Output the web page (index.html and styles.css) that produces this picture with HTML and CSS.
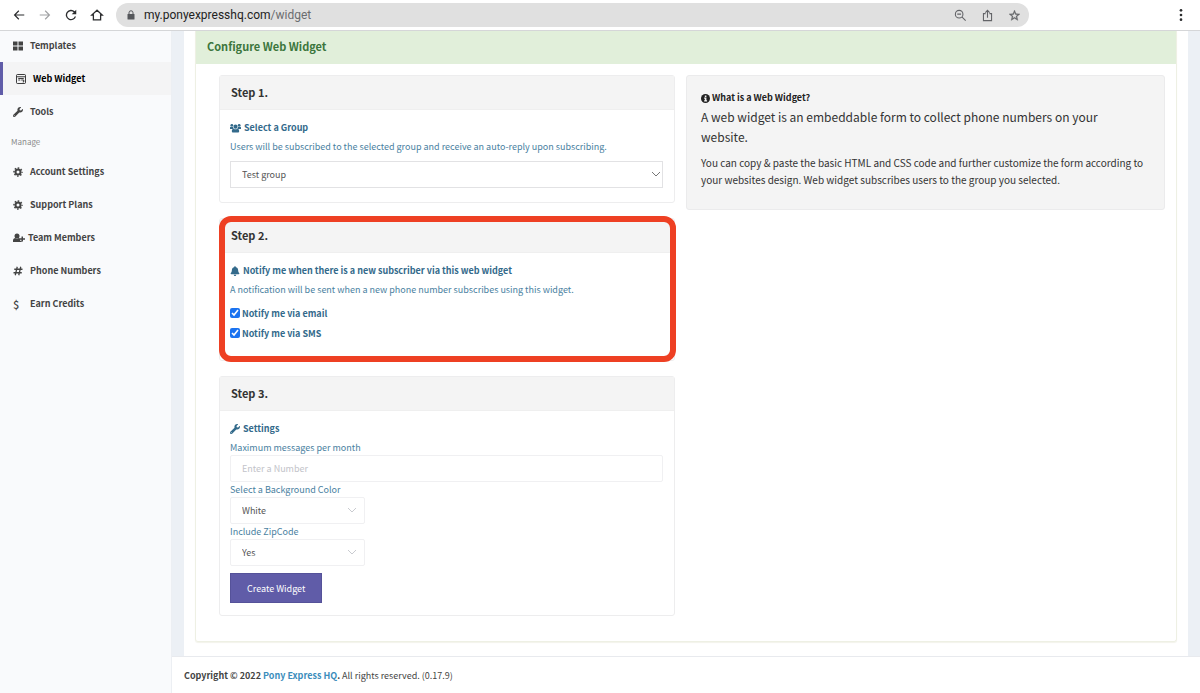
FILE: index.html
```html
<!DOCTYPE html>
<html lang="en">
<head>
    <meta charset="UTF-8">
    <meta name="viewport" content="width=device-width, initial-scale=1.0">
    <title>Web Widget - Pony Express HQ</title>
    <link rel="stylesheet" href="styles.css">
</head>
<body>

    <!-- Shared icons -->
    <svg class="sprite" aria-hidden="true">
        <symbol id="wrench" viewBox="0 0 512 512">
            <path d="M507.73 109.1c-2.24-9.03-13.54-12.09-20.12-5.51l-74.36 74.36-67.88-11.31-11.31-67.88 74.36-74.36c6.62-6.62 3.43-17.9-5.66-20.16-47.38-11.74-99.55.91-136.58 37.93-39.64 39.64-50.55 97.1-34.05 147.2L18.74 402.76c-24.99 24.99-24.99 65.51 0 90.5 24.99 24.99 65.51 24.99 90.5 0l213.21-213.21c50.12 16.71 107.47 5.68 147.37-34.22 37.07-37.07 49.7-89.32 37.91-136.73zM64 472c-13.25 0-24-10.75-24-24 0-13.26 10.75-24 24-24s24 10.74 24 24c0 13.25-10.75 24-24 24z"/>
        </symbol>
        <symbol id="cog" viewBox="0 0 20 20">
            <circle cx="10" cy="10" r="5" fill="none" stroke="currentColor" stroke-width="4"/>
            <circle cx="10" cy="10" r="8" fill="none" stroke="currentColor" stroke-width="3" stroke-dasharray="3.14" stroke-dashoffset="1.57"/>
        </symbol>
        <symbol id="chevron" viewBox="0 0 10 6">
            <path d="M1 1l4 4 4-4" fill="none" stroke="currentColor"/>
        </symbol>
    </svg>

    <!-- Browser bar -->
    <header class="browser-bar">
        <button class="bar-btn" aria-label="Back"><svg viewBox="0 0 24 24"><path d="M21 11H6.83l5.59-5.59L11 4l-8 8 8 8 1.41-1.41L6.83 13H21z"/></svg></button>
        <button class="bar-btn disabled" aria-label="Forward"><svg viewBox="0 0 24 24"><path d="M3 11h14.17l-5.59-5.59L13 4l8 8-8 8-1.41-1.41L17.17 13H3z"/></svg></button>
        <button class="bar-btn" aria-label="Reload"><svg viewBox="0 0 24 24"><path d="M18.4 5.6A9 9 0 1 0 20.7 14.6h-2.4A6.7 6.7 0 1 1 16.7 7.3L13.2 10.8H21V3z"/></svg></button>
        <button class="bar-btn" aria-label="Home"><svg viewBox="0 0 24 24"><path d="M12 3.8L3 12h2.8v8.2h12.4V12H21z" fill="none" stroke="currentColor" stroke-width="2.2"/></svg></button>
        <div class="address">
            <svg class="lock" viewBox="0 0 16 20"><path d="M2 8h12a1 1 0 0 1 1 1v9a1 1 0 0 1-1 1H2a1 1 0 0 1-1-1V9a1 1 0 0 1 1-1z"/><path d="M4 9V5.500a4 4 0 0 1 8 0V9" fill="none" stroke="currentColor" stroke-width="2"/></svg>
            <span class="url">my.ponyexpresshq.com<span class="path">/widget</span></span>
            <div class="address-tools">
                <button class="bar-btn" aria-label="Zoom"><svg viewBox="0 0 24 24" fill="none" stroke="currentColor" stroke-width="2"><circle cx="9.500" cy="9.500" r="7"/><path d="M6 9.500h7M14.500 14.500l7 7"/></svg></button>
                <button class="bar-btn" aria-label="Share"><svg viewBox="0 0 24 24" fill="none" stroke="currentColor" stroke-width="2"><path d="M8.500 8.500H4.500v13h15v-13h-4M12 16V2.500M8 6.500l4-4 4 4"/></svg></button>
                <button class="bar-btn" aria-label="Bookmark"><svg viewBox="0 0 24 24"><path d="M22 9.240l-7.190-.620L12 2 9.190 8.630 2 9.240l5.460 4.730L5.820 21 12 17.270 18.180 21l-1.630-7.030L22 9.240zM12 15.400l-3.760 2.270 1-4.280-3.320-2.880 4.380-.380L12 6.100l1.710 4.040 4.380.380-3.320 2.880 1 4.280L12 15.400z" stroke="currentColor" stroke-width=".7"/></svg></button>
            </div>
        </div>
        <button class="bar-btn menu" aria-label="Menu"><svg viewBox="0 0 24 24"><circle cx="12" cy="4" r="2.300"/><circle cx="12" cy="12" r="2.300"/><circle cx="12" cy="20" r="2.300"/></svg></button>
    </header>

    <div class="wrapper">
        <!-- Sidebar -->
        <nav class="sidebar">
            <a href="#"><svg class="icon" viewBox="0 0 20 20"><path d="M0 1h9v8H0zM11 1h9v8h-9zM0 11h9v8H0zM11 11h9v8h-9z"/></svg>Templates</a>
            <a href="#" class="active"><svg class="icon" viewBox="0 0 20 20" fill="none" stroke="currentColor" stroke-width="1.500"><rect x="1" y="1" width="18" height="18" rx="2"/><path d="M2 5.500h16M4.500 9h11M4.500 12h4M10.500 12h5v4h-2"/></svg>Web Widget</a>
            <a href="#"><svg class="icon"><use href="#wrench"/></svg>Tools</a>
            <h6>Manage</h6>
            <a href="#"><svg class="icon"><use href="#cog"/></svg>Account Settings</a>
            <a href="#"><svg class="icon"><use href="#cog"/></svg>Support Plans</a>
            <a href="#" class="wide-icon"><svg class="icon" viewBox="0 0 24 20"><circle cx="8" cy="6" r="5"/><path d="M0 18v-3c0-3 2-5 4.500-5 2 1.500 5 1.500 7 0 1.500 0 2.500.5 3.300 1.500H14v4h3V18zM17 7h3v3.500h4v3h-4V17h-3v-3.500h-3v-3h3z"/></svg>Team Members</a>
            <a href="#"><svg class="icon" viewBox="0 0 20 20" fill="none" stroke="currentColor" stroke-width="2.600"><path d="M8.500 1.500L4.500 18.500M15.500 1.500L11.500 18.500M2.500 6.500H19M1 13.500H17.500"/></svg>Phone Numbers</a>
            <a href="#"><span class="icon dollar">$</span>Earn Credits</a>
        </nav>

        <div class="main">
            <main class="content">
                <section class="panel">
                    <h1>Configure Web Widget</h1>
                    <div class="columns">
                        <form class="steps">
                            <!-- Step 1 -->
                            <section class="card">
                                <h2>Step 1.</h2>
                                <div class="card-body">
                                    <label class="title" for="group"><svg class="users" viewBox="0 0 24 20"><circle cx="4" cy="4" r="3"/><circle cx="20" cy="4" r="3"/><circle cx="12" cy="7" r="4.500"/><path d="M0 12V9c0-1.500 1-2 2-2 1.500 1 3 1 4.500.500 0 2 .500 3.500 1.500 4.500zM24 12V9c0-1.500-1-2-2-2-1.500 1-3 1-4.500.500 0 2-.500 3.500-1.500 4.500zM4 17c0-3 1-5.500 4-5.500 2.500 1.500 5.500 1.500 8 0 3 0 4 2.500 4 5.500 0 2-1 3-3 3H7c-2 0-3-1-3-3z"/></svg>Select a Group</label>
                                    <p class="hint">Users will be subscribed to the selected group and receive an auto-reply upon subscribing.</p>
                                    <div class="select group-select">
                                        <select id="group"><option>Test group</option></select>
                                        <svg><use href="#chevron"/></svg>
                                    </div>
                                </div>
                            </section>

                            <!-- Step 2 -->
                            <section class="card highlight">
                                <h2>Step 2.</h2>
                                <div class="card-body">
                                    <h3 class="title"><svg viewBox="0 0 448 512"><path d="M224 512c35.32 0 63.97-28.65 63.97-64H160.03c0 35.35 28.65 64 63.97 64zm215.39-149.71c-19.32-20.76-55.47-51.99-55.47-154.29 0-77.7-54.48-139.9-127.94-155.16V32c0-17.67-14.32-32-31.98-32s-31.98 14.33-31.98 32v20.84C118.56 68.1 64.08 130.3 64.08 208c0 102.3-36.15 133.53-55.47 154.29-6 6.45-8.66 14.16-8.61 21.71.11 16.4 12.98 32 32.1 32h383.8c19.12 0 32-15.6 32.1-32 .05-7.55-2.61-15.27-8.61-21.71z"/></svg>Notify me when there is a new subscriber via this web widget</h3>
                                    <p class="hint">A notification will be sent when a new phone number subscribes using this widget.</p>
                                    <div class="checks">
                                        <label><input type="checkbox" checked>Notify me via email</label>
                                        <label><input type="checkbox" checked>Notify me via SMS</label>
                                    </div>
                                </div>
                            </section>

                            <!-- Step 3 -->
                            <section class="card">
                                <h2>Step 3.</h2>
                                <div class="card-body settings">
                                    <h3 class="title"><svg><use href="#wrench"/></svg>Settings</h3>
                                    <label for="max">Maximum messages per month</label>
                                    <input type="text" id="max" placeholder="Enter a Number">
                                    <label for="color">Select a Background Color</label>
                                    <div class="select small">
                                        <select id="color"><option>White</option></select>
                                        <svg><use href="#chevron"/></svg>
                                    </div>
                                    <label for="zip">Include ZipCode</label>
                                    <div class="select small">
                                        <select id="zip"><option>Yes</option></select>
                                        <svg><use href="#chevron"/></svg>
                                    </div>
                                    <button type="button" class="create">Create Widget</button>
                                </div>
                            </section>
                        </form>

                        <aside class="info">
                            <h3><svg viewBox="0 0 20 20"><circle cx="10" cy="10" r="10"/><path d="M8.500 3.500h3.500v3H8.500zM7 8h5v6h1.500v2.500H7V14h1.500v-3.500H7z" fill="#f4f4f4"/></svg>What is a Web Widget?</h3>
                            <p class="lead">A web widget is an embeddable form to collect phone numbers on your website.</p>
                            <p>You can copy &amp; paste the basic HTML and CSS code and further customize the form according to your websites design. Web widget subscribes users to the group you selected.</p>
                        </aside>
                    </div>
                </section>
            </main>

            <footer><strong>Copyright © 2022 <a href="#">Pony Express HQ</a>.</strong> All rights reserved. (0.17.9)</footer>
        </div>
    </div>

</body>
</html>
```
FILE: styles.css
```css
* {
    box-sizing: border-box;
}

body {
    margin: 0;
    min-height: 100vh;
    display: flex;
    flex-direction: column;
    font-family: "Noto Sans CJK JP", "Noto Sans", sans-serif;
    font-size: 9px;
    line-height: 18px;
    color: #333;
    background-color: #ecf0f5;
}

h1, h2, h3, h6, p {
    margin: 0;
}

svg {
    fill: currentColor;
}

svg[fill="none"] {
    fill: none;
}

.sprite {
    position: absolute;
    width: 0;
    height: 0;
}

/* Browser bar */
.browser-bar {
    position: relative;
    z-index: 1;
    display: flex;
    align-items: center;
    gap: 12px;
    height: 31px;
    padding: 0 12px;
    background-color: #fff;
    border-bottom: 1px solid #d5d6d8;
    font-family: Roboto, sans-serif;
}

.bar-btn {
    display: flex;
    padding: 0;
    border: none;
    background: none;
    color: #2b2c2e;
}

.bar-btn svg {
    width: 14px;
    height: 14px;
}

.bar-btn.disabled {
    color: #a0a1a3;
}

.address {
    display: flex;
    align-items: center;
    flex: 1;
    height: 24px;
    margin-right: 133px;
    padding: 0 8px 0 11px;
    border-radius: 12px;
    background-color: #e0e0e0;
}

.lock {
    width: 8px;
    height: 10px;
    margin-right: 9px;
    color: #55575b;
}

.url {
    font-size: 12px;
    color: #222;
}

.url .path {
    color: #6b6c6f;
}

.address-tools {
    display: flex;
    gap: 14px;
    margin-left: auto;
}

.address-tools .bar-btn {
    color: #636468;
}

.address-tools svg {
    width: 13px;
    height: 13px;
}

/* Sidebar */
.wrapper {
    display: flex;
    flex: 1;
}

.sidebar {
    width: 172px;
    margin-top: -2px;
    background-color: #f9fafc;
    border-right: 1px solid #eceff3;
}

.sidebar a {
    display: flex;
    align-items: center;
    gap: 7px;
    height: 33px;
    padding-left: 13px;
    color: #444;
    font-weight: 700;
    text-decoration: none;
}

.sidebar a.active {
    border-left: 3px solid #605ca8;
    background-color: #f4f4f5;
    color: #000;
}

.sidebar .icon {
    width: 10px;
    height: 10px;
}

.sidebar .wide-icon {
    gap: 3px;
}

.sidebar .wide-icon .icon {
    width: 12px;
}

.sidebar .dollar {
    line-height: 10px;
    font-size: 11px;
    font-weight: 500;
}

.sidebar h6 {
    padding-left: 11px;
    font-size: 8px;
    font-weight: 400;
    line-height: 27px;
    color: #8b8b8b;
}

/* Main area */
.main {
    flex: 1;
    display: flex;
    flex-direction: column;
}

.content {
    flex: 1;
    margin: 0 12px;
    padding: 0 11px 13px;
    background-color: #fff;
}

.panel {
    border: 1px solid #eef0e4;
    border-top: none;
    border-radius: 0 0 3px 3px;
    box-shadow: 0 1px 1px #f3f3ec;
}

.panel h1 {
    padding: 0 11px 2px;
    font-size: 11px;
    line-height: 31px;
    color: #3c763d;
    background-color: #e1efda;
}

.columns {
    display: grid;
    grid-template-columns: 456fr 479fr;
    align-items: start;
    gap: 11px;
    padding: 11px 11px 25px 23px;
}

.steps {
    display: flex;
    flex-direction: column;
    gap: 15px;
}

/* Cards */
.card {
    border: 1px solid #ededee;
    border-radius: 3px;
    background-color: #fff;
}

.card h2 {
    padding: 0 11px;
    font-size: 11px;
    line-height: 33px;
    background-color: #f4f4f4;
    border-bottom: 1px solid #efefef;
}

.card-body {
    padding: 9px 11px 14px 10px;
    color: #4a7f9f;
}

.title {
    display: flex;
    align-items: center;
    gap: 3px;
    font-size: 9px;
    font-weight: 700;
    line-height: 18px;
    color: #336a8b;
}

.title svg {
    width: 10px;
    height: 10px;
}

.title .users {
    width: 11px;
}

.hint {
    margin-bottom: 4px;
    line-height: 20px;
}

.highlight {
    position: relative;
}

.highlight::after {
    content: "";
    position: absolute;
    inset: -3px -2px -2px -1px;
    border: 6px solid #ee4023;
    border-radius: 12px;
    pointer-events: none;
}

/* Form fields */
input[type="text"], select {
    display: block;
    width: 100%;
    height: 27px;
    padding: 0 11px;
    border: 1px solid #f0f0f2;
    border-radius: 2px;
    background-color: #fff;
    font-family: inherit;
    font-size: 9px;
    color: #555;
    appearance: none;
}

input::placeholder {
    color: #c2c3c9;
}

.select {
    position: relative;
}

.select svg {
    position: absolute;
    top: 10px;
    right: 8px;
    width: 10px;
    height: 6px;
    color: #c9cbd0;
}

.select.small {
    width: 135px;
}

.group-select select {
    border-color: #e2e2e4;
    border-radius: 0;
}

.group-select svg {
    right: 2px;
    color: #777;
}

.checks {
    margin-bottom: 2px;
    font-weight: 700;
    color: #336a8b;
}

.checks label {
    display: flex;
    align-items: center;
    gap: 2px;
    height: 20px;
}

.checks input {
    width: 10px;
    height: 10px;
    margin: 0 0 2px;
    accent-color: #1b73f0;
}

.settings {
    padding-bottom: 12px;
}

.settings .title {
    margin-bottom: 2px;
}

.settings label {
    display: block;
    line-height: 15px;
}

.create {
    height: 30px;
    margin-top: 7px;
    padding: 0 16px;
    border: 1px solid #555299;
    background-color: #605ca8;
    color: #fff;
    font-family: inherit;
    font-size: 9px;
}

/* Info box */
.info {
    padding: 13px 20px 21px 14px;
    border: 1px solid #ebebec;
    border-radius: 3px;
    background-color: #f4f4f4;
    font-size: 10px;
    line-height: 17px;
}

.info h3 {
    display: flex;
    align-items: center;
    gap: 2px;
    font-size: 9px;
    line-height: 18px;
    color: #222;
}

.info h3 svg {
    width: 9px;
    height: 9px;
}

.info .lead {
    margin-bottom: 7px;
    font-size: 12px;
    line-height: 20px;
}

/* Footer */
footer {
    padding: 10px 12px 8px;
    border-top: 1px solid #e8eaee;
    background-color: #fff;
    color: #444;
}

footer a {
    color: #3c8dbc;
    text-decoration: none;
}
```
